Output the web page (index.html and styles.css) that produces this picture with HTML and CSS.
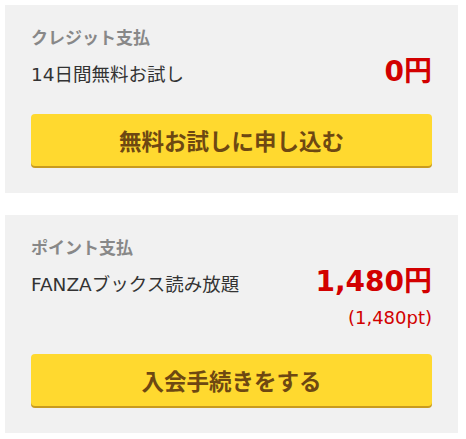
FILE: index.html
```html
<!DOCTYPE html>
<html lang="ja">
<head>
<meta charset="utf-8">
<link rel="stylesheet" href="styles.css">
</head>
<body>
<div class="page">
  <section class="card">
    <h2 class="card-title">クレジット支払</h2>
    <div class="row">
      <span class="plan">14日間無料お試し</span>
      <span class="price">0円</span>
    </div>
    <a class="btn">無料お試しに申し込む</a>
  </section>
  <section class="card">
    <h2 class="card-title">ポイント支払</h2>
    <div class="row">
      <span class="plan">FANZAブックス読み放題</span>
      <span class="price">1,480円</span>
    </div>
    <div class="pt">(1,480pt)</div>
    <a class="btn">入会手続きをする</a>
  </section>
</div>
</body>
</html>
```
FILE: styles.css
```css
html, body {
  margin: 0;
  padding: 0;
  background: #fff;
}
body {
  font-family: "DejaVu Sans", "Noto Sans CJK JP", sans-serif;
  color: #333;
}
.page {
  padding: 5px 8px 0 5px;
  display: flex;
  flex-direction: column;
  gap: 22px;
}
.card {
  background: #f1f1f1;
  padding: 20px 26px 27px;
  display: flex;
  flex-direction: column;
}
.card-title {
  margin: 0;
  font-family: "Noto Sans CJK JP", sans-serif;
  font-size: 17px;
  font-weight: 700;
  line-height: 24px;
  color: #888;
}
.row {
  display: flex;
  justify-content: space-between;
  align-items: baseline;
  padding: 9px 0 10px;
}
.plan {
  font-size: 18.5px;
  line-height: 28px;
  color: #333;
}
.price {
  font-size: 28px;
  font-weight: 700;
  line-height: 28px;
  color: #d20000;
}
.pt {
  text-align: right;
  font-size: 18px;
  line-height: 18px;
  color: #d20000;
  padding-bottom: 12px;
}
.btn {
  display: flex;
  align-items: center;
  justify-content: center;
  height: 52px;
  margin-top: 15px;
  background: #ffd92f;
  border-radius: 4px;
  box-shadow: 0 2px 0 #c99b1e;
  font-family: "Noto Sans CJK JP", sans-serif;
  font-size: 22.5px;
  font-weight: 700;
  color: #6e4812;
  text-decoration: none;
}
```
